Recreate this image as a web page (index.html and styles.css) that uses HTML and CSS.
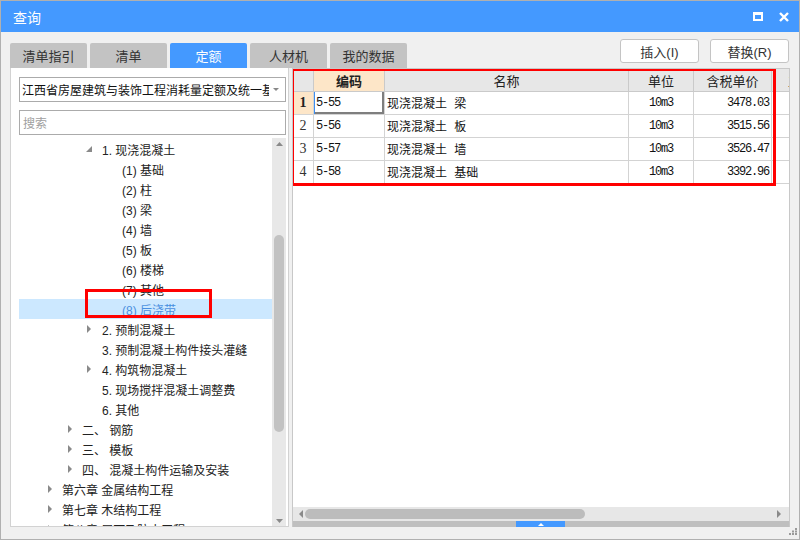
FILE: index.html
```html
<!DOCTYPE html>
<html lang="zh">
<head>
<meta charset="utf-8">
<title>查询</title>
<link rel="stylesheet" href="styles.css">
</head>
<body>
<div class="window">
  <div class="titlebar">
    <span class="title">查询</span>
    <div class="winbtns">
      <svg class="wb" width="10" height="9" viewBox="0 0 10 9"><path d="M0 0H10V9H0Z M2 3V7H8V3Z" fill="#fff" fill-rule="evenodd"/></svg>
      <svg class="wb" width="10" height="10" viewBox="0 0 10 10"><path d="M1 1L9 9M9 1L1 9" stroke="#fff" stroke-width="2.4"/></svg>
    </div>
  </div>
  <div class="main">
    <div class="tabs">
      <div class="tab">清单指引</div>
      <div class="tab">清单</div>
      <div class="tab active">定额</div>
      <div class="tab">人材机</div>
      <div class="tab">我的数据</div>
    </div>
    <div class="actions">
      <button class="btn">插入(I)</button>
      <button class="btn">替换(R)</button>
    </div>
    <div class="lpanel">
      <div class="select">
        <span class="seltext">江西省房屋建筑与装饰工程消耗量定额及统一基价表</span>
        <svg class="selarrow" width="6" height="4" viewBox="0 0 6 4"><path d="M0 0H6L3 3Z" fill="#888"/></svg>
      </div>
      <div class="search">搜索</div>
      <div class="treewrap">
        <div class="tree">
          <div class="row l2"><span class="tg"><svg width="6" height="6" viewBox="0 0 6 6"><path d="M6 0V6H0Z" fill="#8a8a8a"/></svg></span>1. 现浇混凝土</div>
          <div class="row l3"><span class="tg"></span>(1) 基础</div>
          <div class="row l3"><span class="tg"></span>(2) 柱</div>
          <div class="row l3"><span class="tg"></span>(3) 梁</div>
          <div class="row l3"><span class="tg"></span>(4) 墙</div>
          <div class="row l3"><span class="tg"></span>(5) 板</div>
          <div class="row l3"><span class="tg"></span>(6) 楼梯</div>
          <div class="row l3"><span class="tg"></span>(7) 其他</div>
          <div class="row l3 sel"><span class="tg"></span>(8) 后浇带</div>
          <div class="row l2"><span class="tg"><svg class="col" width="5" height="8" viewBox="0 0 5 8"><path d="M0 0L4 4L0 8Z" fill="#8a8a8a"/></svg></span>2. 预制混凝土</div>
          <div class="row l2"><span class="tg"></span>3. 预制混凝土构件接头灌缝</div>
          <div class="row l2"><span class="tg"><svg class="col" width="5" height="8" viewBox="0 0 5 8"><path d="M0 0L4 4L0 8Z" fill="#8a8a8a"/></svg></span>4. 构筑物混凝土</div>
          <div class="row l2"><span class="tg"></span>5. 现场搅拌混凝土调整费</div>
          <div class="row l2"><span class="tg"></span>6. 其他</div>
          <div class="row l1"><span class="tg"><svg class="col" width="5" height="8" viewBox="0 0 5 8"><path d="M0 0L4 4L0 8Z" fill="#8a8a8a"/></svg></span>二、 钢筋</div>
          <div class="row l1"><span class="tg"><svg class="col" width="5" height="8" viewBox="0 0 5 8"><path d="M0 0L4 4L0 8Z" fill="#8a8a8a"/></svg></span>三、 模板</div>
          <div class="row l1"><span class="tg"><svg class="col" width="5" height="8" viewBox="0 0 5 8"><path d="M0 0L4 4L0 8Z" fill="#8a8a8a"/></svg></span>四、 混凝土构件运输及安装</div>
          <div class="row l0"><span class="tg"><svg class="col" width="5" height="8" viewBox="0 0 5 8"><path d="M0 0L4 4L0 8Z" fill="#8a8a8a"/></svg></span>第六章 金属结构工程</div>
          <div class="row l0"><span class="tg"><svg class="col" width="5" height="8" viewBox="0 0 5 8"><path d="M0 0L4 4L0 8Z" fill="#8a8a8a"/></svg></span>第七章 木结构工程</div>
          <div class="row l0"><span class="tg"><svg class="col" width="5" height="8" viewBox="0 0 5 8"><path d="M0 0L4 4L0 8Z" fill="#8a8a8a"/></svg></span>第八章 屋面及防水工程</div>
        </div>
        <div class="vscroll">
          <svg class="arr" width="7" height="4" viewBox="0 0 7 4"><path d="M0 4L3.5 0L7 4Z" fill="#8a8a8a"/></svg>
          <div class="vtrack"><div class="vthumb"></div></div>
          <svg class="arr" width="7" height="4" viewBox="0 0 7 4"><path d="M0 0H7L3.5 4Z" fill="#8a8a8a"/></svg>
        </div>
        <div class="mark mark-tree"></div>
      </div>
    </div>
    <div class="rpanel">
      <div class="grid">
        <div class="grow head">
          <div class="c rn"></div>
          <div class="c hcode">编码</div>
          <div class="c">名称</div>
          <div class="c">单位</div>
          <div class="c">含税单价</div>
          <div class="c hextra">工程量</div>
        </div>
        <div class="grow">
          <div class="c rn cur">1</div>
          <div class="c code selcell">5-55</div>
          <div class="c name">现浇混凝土 梁</div>
          <div class="c unit">10m3</div>
          <div class="c price">3478.03</div>
          <div class="c"></div>
        </div>
        <div class="grow">
          <div class="c rn">2</div>
          <div class="c code">5-56</div>
          <div class="c name">现浇混凝土 板</div>
          <div class="c unit">10m3</div>
          <div class="c price">3515.56</div>
          <div class="c"></div>
        </div>
        <div class="grow">
          <div class="c rn">3</div>
          <div class="c code">5-57</div>
          <div class="c name">现浇混凝土 墙</div>
          <div class="c unit">10m3</div>
          <div class="c price">3526.47</div>
          <div class="c"></div>
        </div>
        <div class="grow">
          <div class="c rn">4</div>
          <div class="c code">5-58</div>
          <div class="c name">现浇混凝土 基础</div>
          <div class="c unit">10m3</div>
          <div class="c price">3392.96</div>
          <div class="c"></div>
        </div>
        <div class="mark mark-grid"></div>
      </div>
      <div class="hscroll">
        <svg width="5" height="8" viewBox="0 0 5 8"><path d="M5 0L1 4L5 8Z" fill="#8a8a8a"/></svg>
        <div class="htrack"><div class="hthumb"></div></div>
        <svg width="5" height="8" viewBox="0 0 5 8"><path d="M0 0L4 4L0 8Z" fill="#8a8a8a"/></svg>
      </div>
      <div class="splitter"><div class="handle"><svg width="6" height="3" viewBox="0 0 6 3"><path d="M0 3L3 0L6 3Z" fill="#fff"/></svg></div></div>
    </div>
  </div>
  <div class="footer">
    <svg class="grip" width="9" height="7" viewBox="0 0 9 7"><g fill="#9a9a9a"><rect x="7" y="0" width="2" height="2"/><rect x="4" y="2.5" width="2" height="2"/><rect x="7" y="2.5" width="2" height="2"/><rect x="1" y="5" width="2" height="2"/><rect x="4" y="5" width="2" height="2"/><rect x="7" y="5" width="2" height="2"/></g></svg>
  </div>
</div>
</body>
</html>
```

FILE: styles.css
```css
* { box-sizing: border-box; }
html, body { margin: 0; padding: 0; background: #f0f0f0; }
body {
  font-family: "Liberation Sans", "Noto Sans CJK SC", sans-serif;
  font-size: 12px;
  color: #222;
}
.window {
  width: 800px;
  height: 540px;
  border: 1px solid #b0b0b0;
  background: #f0f0f0;
  display: flex;
  flex-direction: column;
}
.titlebar {
  height: 31px;
  background: #4499ff;
  display: flex;
  align-items: center;
  justify-content: space-between;
  padding: 0 10px 0 12px;
}
.title { color: #fff; font-size: 14px; font-family: "Noto Sans CJK SC", sans-serif; }
.winbtns { display: flex; align-items: center; gap: 16px; }
.wb { display: block; }
.main {
  display: grid;
  grid-template-columns: 279px 498px;
  grid-template-rows: 36px 459px;
  column-gap: 3px;
  padding: 0 9px;
}
.tabs { display: flex; gap: 3px; align-self: end; }
.tab {
  flex: none;
  width: 77px;
  height: 25px;
  background: #c3c3c3;
  border-radius: 2px 2px 0 0;
  display: flex;
  align-items: center;
  justify-content: center;
  font-size: 13px;
  color: #333;
  font-family: "Noto Sans CJK SC", sans-serif;
}
.tab.active { background: #4499ff; color: #fff; }
.actions { display: flex; justify-content: flex-end; gap: 11px; padding-top: 7px; align-items: flex-start; padding-right: 1px; }
.btn {
  width: 79px;
  height: 24px;
  border: 1px solid #c4c4c4;
  border-radius: 3px;
  background: #fff;
  font-family: "Liberation Sans", "Noto Sans CJK SC", sans-serif;
  font-size: 13px;
  color: #333;
  padding: 0;
}
.lpanel {
  background: #fff;
  border: 1px solid #d2d2d2;
  border-top: none;
  padding: 9px 2px 0 8px;
  display: flex;
  flex-direction: column;
  min-height: 0;
}
.select {
  height: 25px;
  border: 1px solid #ababab;
  display: flex;
  align-items: center;
  padding: 0 6px 0 2px;
  gap: 4px;
  overflow: hidden;
}
.seltext { flex: 1; white-space: nowrap; overflow: hidden; font-family: "Noto Sans CJK SC", sans-serif; font-size: 12px; color: #111; }
.selarrow { flex: none; }
.search {
  margin-top: 8px;
  height: 25px;
  border: 1px solid #ababab;
  padding: 0 3px;
  display: flex;
  align-items: center;
  color: #a0a0a0;
  font-family: "Noto Sans CJK SC", sans-serif;
}
.treewrap {
  margin-top: 3px;
  flex: 1;
  min-height: 0;
  display: flex;
  position: relative;
}
.tree { flex: 1; overflow: hidden; padding-top: 1px; }
.row {
  height: 20px;
  display: flex;
  align-items: center;
  white-space: nowrap;
  color: #222;
}
.row.l0 { padding-left: 28px; }
.row.l1 { padding-left: 48px; }
.row.l2 { padding-left: 67px; }
.row.l3 { padding-left: 88px; }
.row.l2 .tg { width: 16px; }
.tg { width: 15px; flex: none; display: flex; align-items: center; }
.tg svg { display: block; }
.tg svg.col { margin-left: 1px; }
.row.sel { background: #cce8ff; color: #4a8fe0; }
.vscroll {
  width: 14px;
  flex: none;
  background: #e8e8e8;
  display: flex;
  flex-direction: column;
  align-items: center;
  padding: 4px 0 3px;
}
.arr { display: block; flex: none; }
.vtrack { flex: 1; width: 100%; padding: 0 2px; }
.vthumb {
  margin-top: 89px;
  height: 197px;
  background: #c2c2c2;
  border-radius: 5px;
}
.rpanel {
  border: 1px solid #c8c8c8;
  border-bottom: none;
  display: flex;
  flex-direction: column;
  background: #fff;
  min-height: 0;
}
.grid { flex: 1; overflow: hidden; position: relative; }
.grow {
  display: grid;
  grid-template-columns: 21px 71px 244px 65px 78px 60px;
  height: 23px;
}
.c {
  border-right: 1px solid #d3d3d3;
  border-bottom: 1px solid #d3d3d3;
  display: flex;
  align-items: center;
  white-space: nowrap;
  overflow: hidden;
  font-family: "Liberation Mono", "Noto Sans CJK SC", monospace;
  font-size: 12px;
  letter-spacing: -1.2px;
  color: #111;
}
.head .c {
  background: #e7e7e7;
  border-color: #cacaca;
  justify-content: center;
  font-family: "Noto Sans CJK SC", sans-serif;
  font-size: 13px;
  letter-spacing: 0;
  color: #222;
}
.head .c.hcode { background: #fde6c8; font-weight: bold; }
.head .c.hextra { justify-content: flex-start; padding-left: 16px; }
.c.rn {
  background: #fff;
  justify-content: center;
  font-family: "Liberation Serif", serif;
  font-size: 14px;
  letter-spacing: 0;
  color: #333;
}
.head .c.rn { background: #e7e7e7; }
.c.rn.cur { background: #fde6c8; font-weight: bold; color: #222; }
.c.code { padding-left: 2px; }
.c.name { padding-left: 2px; font-size: 12px; letter-spacing: 0; }
.c.unit { justify-content: center; }
.c.price { justify-content: flex-end; padding-right: 2px; }
.c.selcell { box-shadow: inset 1px 0 0 #3d8ef0, inset -2px -2px 0 #7e7e7e; }
.hscroll {
  height: 14px;
  flex: none;
  background: #e7e7e7;
  display: flex;
  align-items: center;
  padding: 0 7px 0 5px;
  gap: 2px;
}
.hscroll svg { display: block; flex: none; }
.htrack { flex: 1; height: 10px; }
.hthumb { width: 280px; height: 10px; background: #bcbcbc; border-radius: 5px; }
.splitter {
  height: 6px;
  flex: none;
  background: #bfbfbf;
  display: flex;
  justify-content: center;
}
.handle {
  width: 49px;
  height: 6px;
  background: #4499ff;
  display: flex;
  align-items: center;
  justify-content: center;
  margin-left: -1px;
}
.handle svg { display: block; }
.footer {
  flex: 1;
  display: flex;
  justify-content: flex-end;
  align-items: flex-start;
  padding: 1px 2px 0 0;
}
.grip { display: block; }
.mark {
  position: absolute;
  border: 3px solid #ff0000;
  pointer-events: none;
}
.mark-tree { left: 66px; top: 151px; width: 127px; height: 29px; }
.mark-grid { left: -2px; top: -1px; width: 485px; height: 118px; }
```
